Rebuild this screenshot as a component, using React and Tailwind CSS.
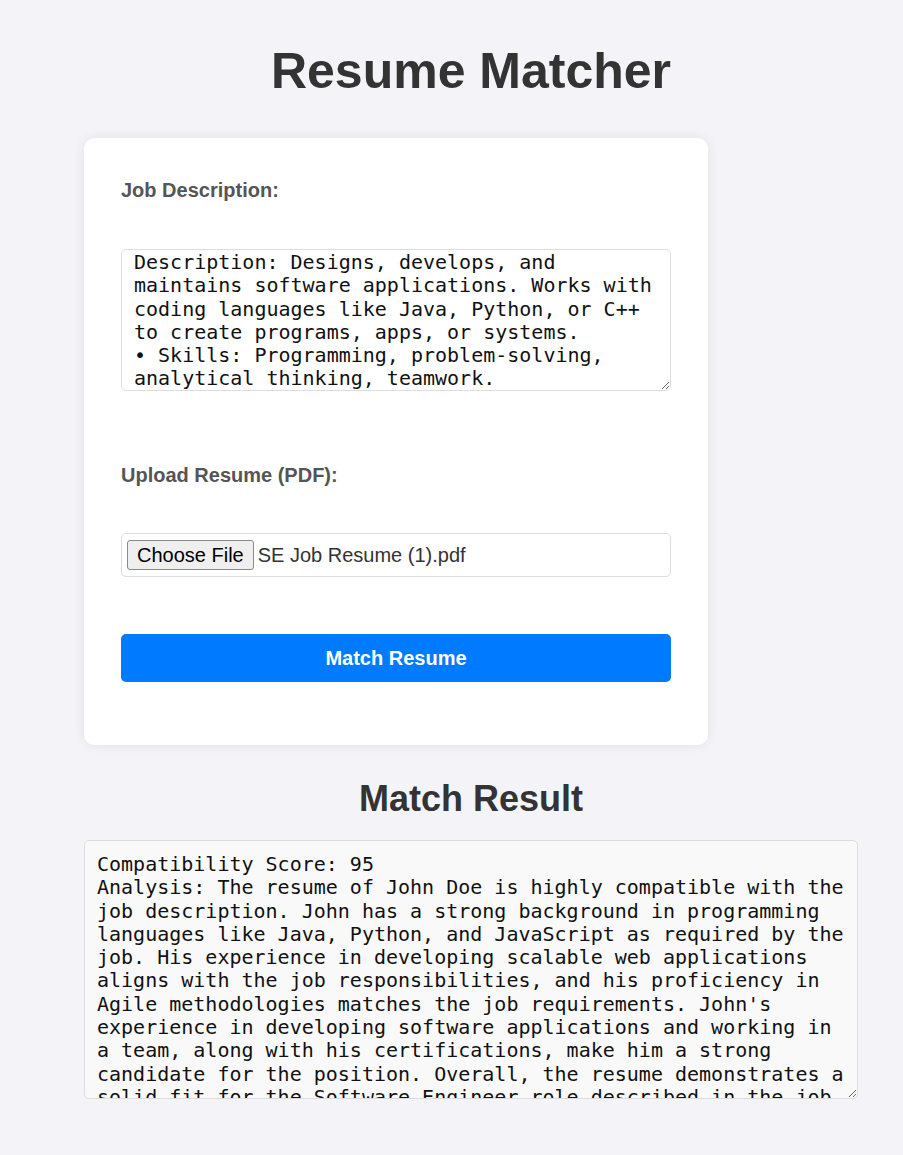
import { useState } from "react"

const JOB_TEXT =
  "Description: Designs, develops, and maintains software applications. Works with coding languages like Java, Python, or C++ to create programs, apps, or systems.\n• Skills: Programming, problem-solving, analytical thinking, teamwork."

const RESULT_TEXT =
  "Compatibility Score: 95\nAnalysis: The resume of John Doe is highly compatible with the job description. John has a strong background in programming languages like Java, Python, and JavaScript as required by the job. His experience in developing scalable web applications aligns with the job responsibilities, and his proficiency in Agile methodologies matches the job requirements. John's experience in developing software applications and working in a team, along with his certifications, make him a strong candidate for the position. Overall, the resume demonstrates a solid fit for the Software Engineer role described in the job description."

const sans = "font-['Liberation_Sans',Arial,sans-serif]"
const mono = "font-['DejaVu_Sans_Mono',Menlo,monospace]"

export default function App() {
  const [job, setJob] = useState(JOB_TEXT)

  return (
    <div className={`min-h-screen bg-[#f4f4f8] pl-[84px] pt-[42px] pb-10 ${sans}`}>
      <div className="w-[774px]">
        <h1 className="text-center text-[50px] leading-[58px] font-bold text-[#333]">Resume Matcher</h1>

        <div className="mt-[38px] w-[624px] rounded-[10px] bg-white px-[37px] pt-[41px] pb-[63px] shadow-[0_0_12px_rgba(0,0,0,0.08)]">
          <label className="block text-[20px] leading-[23px] font-bold text-[#555]">Job Description:</label>
          <textarea
            value={job}
            onChange={(e) => setJob(e.target.value)}
            className={`mt-[47px] block h-[142px] w-full overflow-hidden rounded-[5px] border border-[#ddd] bg-white px-3 pt-[1px] pb-0 text-[20px] leading-[23.3px] text-[#111] outline-none ${mono}`}
          />

          <label className="mt-[73px] block text-[20px] leading-[23px] font-bold text-[#555]">Upload Resume (PDF):</label>
          <div className="mt-[46px] flex h-[44px] items-center rounded-[5px] border border-[#ddd] px-[5px]">
            <span className="flex h-[30px] items-center rounded-[3px] border border-[#8a8a8a] bg-[#efefef] px-[9px] text-[20px] text-black">
              Choose File
            </span>
            <span className="ml-[4px] text-[20px] text-[#333]">SE Job Resume (1).pdf</span>
          </div>

          <button className="mt-[57px] block h-[48px] w-full rounded-[5px] bg-[#007bff] text-[20px] font-bold text-white">
            Match Resume
          </button>
        </div>

        <h2 className="mt-[33px] text-center text-[36px] leading-[41px] font-bold text-[#333]">Match Result</h2>
        <textarea
          readOnly
          value={RESULT_TEXT}
          className={`mt-[21px] block h-[259px] w-full overflow-hidden rounded-[5px] border border-[#ddd] bg-[#f9f9f9] p-3 text-[20px] leading-[23.3px] text-[#111] outline-none ${mono}`}
        />
      </div>
    </div>
  )
}
